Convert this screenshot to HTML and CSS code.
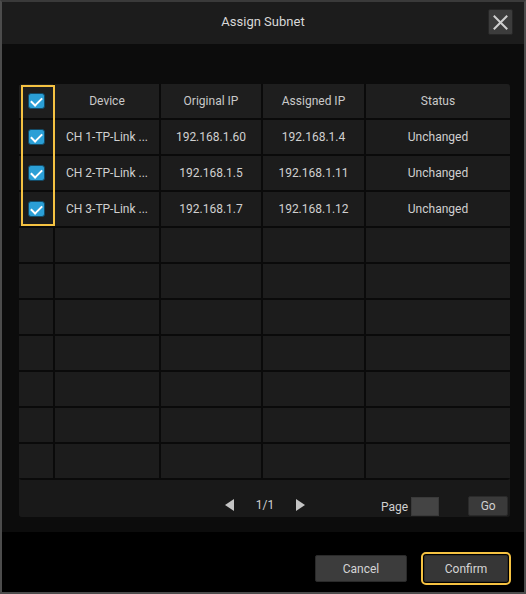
FILE: index.html
```html
<!DOCTYPE html>
<html>
<head>
<meta charset="utf-8">
<link rel="stylesheet" href="styles.css">
</head>
<body>
<div class="window">
  <div class="header">
    <div class="title">Assign Subnet</div>
    <button class="close" aria-label="Close">
      <svg width="15" height="15" viewBox="0 0 15 15"><path d="M1.5 1.5 L13.5 13.5 M13.5 1.5 L1.5 13.5" stroke="#cfcfcf" stroke-width="2" stroke-linecap="square"/></svg>
    </button>
  </div>
  <div class="content">
    <div class="tablewrap">
      <div class="grid">
        <div class="cell hd"><span class="cb"></span></div>
        <div class="cell hd">Device</div>
        <div class="cell hd">Original IP</div>
        <div class="cell hd">Assigned IP</div>
        <div class="cell hd">Status</div>

        <div class="cell"><span class="cb"></span></div>
        <div class="cell">CH 1-TP-Link ...</div>
        <div class="cell">192.168.1.60</div>
        <div class="cell">192.168.1.4</div>
        <div class="cell">Unchanged</div>

        <div class="cell"><span class="cb"></span></div>
        <div class="cell">CH 2-TP-Link ...</div>
        <div class="cell">192.168.1.5</div>
        <div class="cell">192.168.1.11</div>
        <div class="cell">Unchanged</div>

        <div class="cell"><span class="cb"></span></div>
        <div class="cell">CH 3-TP-Link ...</div>
        <div class="cell">192.168.1.7</div>
        <div class="cell">192.168.1.12</div>
        <div class="cell">Unchanged</div>

        <div class="cell"></div><div class="cell"></div><div class="cell"></div><div class="cell"></div><div class="cell"></div>
        <div class="cell"></div><div class="cell"></div><div class="cell"></div><div class="cell"></div><div class="cell"></div>
        <div class="cell"></div><div class="cell"></div><div class="cell"></div><div class="cell"></div><div class="cell"></div>
        <div class="cell"></div><div class="cell"></div><div class="cell"></div><div class="cell"></div><div class="cell"></div>
        <div class="cell"></div><div class="cell"></div><div class="cell"></div><div class="cell"></div><div class="cell"></div>
        <div class="cell"></div><div class="cell"></div><div class="cell"></div><div class="cell"></div><div class="cell"></div>
        <div class="cell"></div><div class="cell"></div><div class="cell"></div><div class="cell"></div><div class="cell"></div>
      </div>
      <div class="highlight"></div>
      <div class="pager">
        <span class="arrow left"></span>
        <span class="pagenum">1/1</span>
        <span class="arrow right"></span>
        <span class="pagelabel">Page</span>
        <span class="pageinput"></span>
        <button class="go">Go</button>
      </div>
    </div>
  </div>
  <div class="footer">
    <button class="btn">Cancel</button>
    <button class="btn confirm">Confirm</button>
  </div>
</div>
</body>
</html>
```

FILE: styles.css
```css
* { box-sizing: border-box; }
html, body { margin: 0; padding: 0; background: #000; }
body { font-family: Roboto, "Noto Sans", "Liberation Sans", sans-serif; font-size: 12px; color: #d2d2d2; }

.window {
  width: 526px;
  height: 594px;
  border: 2px solid #4c4c4c;
  border-top-color: #3a3a3a;
  display: flex;
  flex-direction: column;
  background: #0c0c0c;
}

.header {
  height: 42px;
  background: #1c1c1c;
  position: relative;
  display: flex;
  align-items: center;
  justify-content: center;
  flex: none;
}
.title { font-size: 13px; color: #d8d8d8; margin-top: -3px; }
.close {
  position: absolute;
  right: 11px;
  top: 7px;
  width: 25px;
  height: 26px;
  padding: 0;
  border: 1px solid #262626;
  border-radius: 2px;
  background: #3c3c3c;
  display: flex;
  align-items: center;
  justify-content: center;
}

.content {
  flex: 1;
  padding: 40px 14px 0 17px;
}
.tablewrap {
  position: relative;
  background: #191919;
  border-radius: 3px;
  overflow: hidden;
}
.grid {
  display: grid;
  grid-template-columns: 34px 104px 100px 101px 144px;
  grid-template-rows: 34px repeat(10, 34px);
  gap: 2px;
  background: #0a0a0a;
  padding-bottom: 2px;
  border-radius: 3px;
}
.cell {
  background: #1c1c1c;
  display: flex;
  align-items: center;
  justify-content: center;
  white-space: nowrap;
  color: #d0d0d0;
}
.cell.hd { background: #1e1e1e; color: #c9c9c9; }

.cb {
  width: 17px;
  height: 16px;
  border-radius: 3px;
  background: #2b9fd6;
  border: 1px solid #124a66;
  position: relative;
  margin-left: 1px;
}
.cb::after {
  content: "";
  position: absolute;
  left: 4px;
  top: 1px;
  width: 5px;
  height: 9px;
  border: solid #ffffff;
  border-width: 0 2px 2px 0;
  transform: rotate(45deg);
}

.highlight {
  position: absolute;
  left: 2px;
  top: 1px;
  width: 34px;
  height: 141px;
  border: 2px solid #f5c242;
  pointer-events: none;
}

.pager {
  height: 37px;
  display: flex;
  align-items: center;
  background: #191919;
  padding-top: 12px;
}
.arrow { width: 0; height: 0; border-top: 6px solid transparent; border-bottom: 6px solid transparent; }
.arrow.left { border-right: 9px solid #c4c4c4; margin-left: 206px; }
.arrow.right { border-left: 9px solid #c4c4c4; margin-left: 0; }
.pagenum { width: 62px; text-align: center; color: #d0d0d0; }
.pagelabel { margin-left: 76px; color: #d0d0d0; padding-top: 4px; }
.pageinput { width: 28px; height: 19px; background: #444; margin-left: 3px; border: 1px solid #3a3a3a; margin-top: 3px; }
.go {
  margin-left: 29px;
  width: 40px;
  height: 20px;
  margin-top: 3px;
  background: #3a3a3a;
  border: 1px solid #2a2a2a;
  border-radius: 2px;
  color: #d0d0d0;
  font-family: inherit;
  font-size: 12px;
  padding: 0;
}

.footer {
  height: 60px;
  background: #000;
  flex: none;
  display: flex;
  justify-content: flex-end;
  align-items: flex-start;
  padding: 23px 16px 0 0;
  gap: 17px;
}
.btn {
  height: 27px;
  width: 92px;
  background: #3c3c3c;
  border: 1px solid #2a2a2a;
  border-radius: 2px;
  color: #d4d4d4;
  font-family: inherit;
  font-size: 12px;
  padding: 0;
}
.btn.confirm {
  width: 84px;
  background: #363636;
  outline: 2px solid #f5c242;
  outline-offset: 1px;
}
```
